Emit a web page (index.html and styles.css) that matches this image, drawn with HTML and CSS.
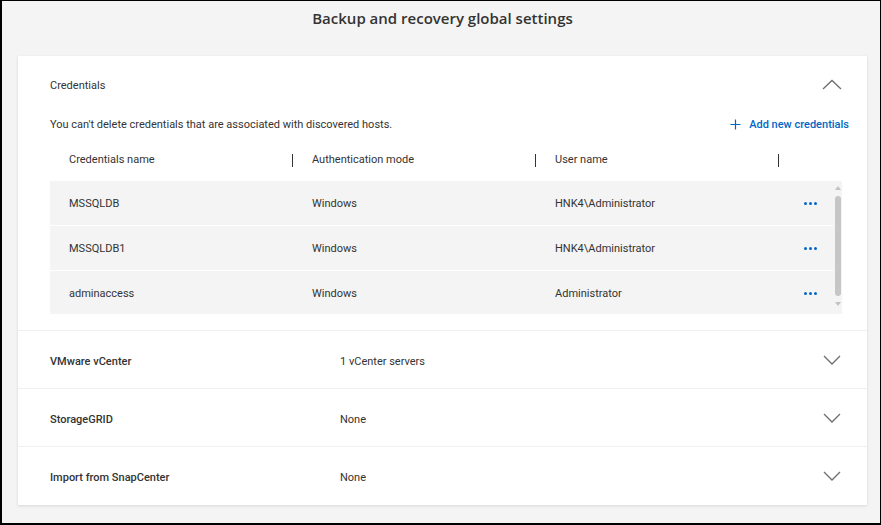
FILE: index.html
```html
<!DOCTYPE html>
<html>
<head>
<meta charset="utf-8">
<link rel="stylesheet" href="styles.css">
</head>
<body>
<div class="frame">
  <h1 class="title">Backup and recovery global settings</h1>
  <div class="card">
    <section class="cred">
      <div class="cred-head">
        <span class="sec-name">Credentials</span>
        <svg class="chev" width="20" height="11" viewBox="0 0 20 11"><path d="M1 10 L10 1.5 L19 10" fill="none" stroke="#6e6e6e" stroke-width="1.3"/></svg>
      </div>
      <div class="info-row">
        <span class="info">You can't delete credentials that are associated with discovered hosts.</span>
        <span class="add">
          <svg width="11" height="11" viewBox="0 0 11 11"><path d="M5.5 0.5 V10.5 M0.5 5.5 H10.5" stroke="#0067c5" stroke-width="1.2" fill="none"/></svg>
          <span>Add new credentials</span>
        </span>
      </div>
      <div class="thead">
        <div class="th first">Credentials name</div>
        <div class="th">Authentication mode</div>
        <div class="th">User name</div>
        <div class="th"></div>
      </div>
      <div class="tbody">
        <div class="rows">
          <div class="tr"><div class="td first">MSSQLDB</div><div class="td">Windows</div><div class="td">HNK4\Administrator</div><div class="td act"><span class="dots"><i></i><i></i><i></i></span></div></div>
          <div class="tr"><div class="td first">MSSQLDB1</div><div class="td">Windows</div><div class="td">HNK4\Administrator</div><div class="td act"><span class="dots"><i></i><i></i><i></i></span></div></div>
          <div class="tr"><div class="td first">adminaccess</div><div class="td">Windows</div><div class="td">Administrator</div><div class="td act"><span class="dots"><i></i><i></i><i></i></span></div></div>
        </div>
        <div class="scroll">
          <span class="arr up"></span>
          <span class="thumb"></span>
          <span class="arr down"></span>
        </div>
      </div>
    </section>
    <section class="acc">
      <span class="acc-name">VMware vCenter</span>
      <span class="acc-val">1 vCenter servers</span>
      <svg class="chev" width="18" height="10" viewBox="0 0 18 10"><path d="M1 1 L9 9 L17 1" fill="none" stroke="#6e6e6e" stroke-width="1.3"/></svg>
    </section>
    <section class="acc">
      <span class="acc-name">StorageGRID</span>
      <span class="acc-val">None</span>
      <svg class="chev" width="18" height="10" viewBox="0 0 18 10"><path d="M1 1 L9 9 L17 1" fill="none" stroke="#6e6e6e" stroke-width="1.3"/></svg>
    </section>
    <section class="acc">
      <span class="acc-name">Import from SnapCenter</span>
      <span class="acc-val">None</span>
      <svg class="chev" width="18" height="10" viewBox="0 0 18 10"><path d="M1 1 L9 9 L17 1" fill="none" stroke="#6e6e6e" stroke-width="1.3"/></svg>
    </section>
  </div>
</div>
</body>
</html>
```
FILE: styles.css
```css
* { box-sizing: border-box; }
html, body { margin: 0; padding: 0; }
body {
  width: 881px;
  height: 525px;
  font-family: Roboto, "Open Sans", sans-serif;
  font-size: 11px;
  color: #333;
  overflow: hidden;
}
.frame {
  width: 881px;
  height: 525px;
  background: #f4f4f4;
  border-top: 1px solid #000;
  border-right: 1px solid #000;
  border-left: 2px solid #000;
  border-bottom: 2px solid #000;
  padding: 0 13px 0 16px;
}
.title {
  margin: 0;
  height: 55px;
  padding-top: 6px;
  text-align: center;
  font-family: "Open Sans", sans-serif;
  font-size: 15px;
  font-weight: 600;
  color: #333;
  line-height: 22px;
}
.card {
  background: #fff;
  box-shadow: 0 1px 3px rgba(0,0,0,0.12);
  height: 449px;
  overflow: hidden;
}
.cred {
  padding: 0 18px 16px 32px;
  border-bottom: 1px solid #f0f0f0;
}
.cred-head {
  height: 57px;
  display: flex;
  align-items: center;
  justify-content: space-between;
}
.sec-name { color: #333; padding-top: 2px; }
.cred-head .chev { margin-right: 7px; margin-top: -1px; }
.info-row {
  display: flex;
  justify-content: space-between;
  align-items: center;
  height: 22px;
}
.add {
  display: flex;
  align-items: center;
  gap: 8px;
  color: #0067c5;
  font-weight: 500;
}
.thead {
  display: grid;
  grid-template-columns: 242px 243px 243px 1fr;
  height: 46px;
  align-items: center;
  margin-right: 7px;
}
.th {
  position: relative;
  padding-left: 20px;
  color: #333;
  height: 14px;
  line-height: 14px;
}
.th.first { padding-left: 19px; }
.th span, .th { padding-top: 0; }
.th:not(.first)::before {
  content: "";
  position: absolute;
  left: 0;
  top: 1px;
  width: 1px;
  height: 13px;
  background: #333;
}
.thead .th { transform: translateY(2px); }
.tbody {
  display: flex;
  background: #f4f4f4;
  width: 792px;
}
.rows { flex: 1; }
.tr {
  display: grid;
  grid-template-columns: 242px 243px 243px 1fr;
  height: 45px;
  align-items: center;
  border-bottom: 1px solid #fff;
}
.tr:last-child { border-bottom: none; height: 43px; padding-top: 1px; }
.td { padding-left: 20px; color: #333; }
.td.first { padding-left: 19px; }
.td.act { padding-left: 26px; }
.dots { display: inline-flex; gap: 2px; vertical-align: middle; }
.dots i {
  width: 3px;
  height: 3px;
  border-radius: 50%;
  background: #0067c5;
  display: block;
}
.scroll {
  width: 9px;
  display: flex;
  flex-direction: column;
  align-items: center;
  padding-top: 5px;
}
.arr {
  width: 0;
  height: 0;
  border-left: 3px solid transparent;
  border-right: 3px solid transparent;
}
.arr.up { border-bottom: 4px solid #c2c2c2; }
.arr.down { border-top: 4px solid #c2c2c2; margin-top: 6px; }
.thumb {
  width: 6px;
  height: 100px;
  margin-top: 6px;
  background: #c6c6c6;
  border-radius: 3px;
}
.acc {
  height: 58px;
  display: flex;
  align-items: center;
  padding: 0 26px 0 32px;
  border-bottom: 1px solid #f0f0f0;
}
.acc:last-child { border-bottom: none; }
.acc-name, .acc-val { padding-top: 3px; }
.acc-name { width: 290px; font-weight: 500; color: #333; }
.acc-val { flex: 1; font-weight: 400; color: #333; }
```
